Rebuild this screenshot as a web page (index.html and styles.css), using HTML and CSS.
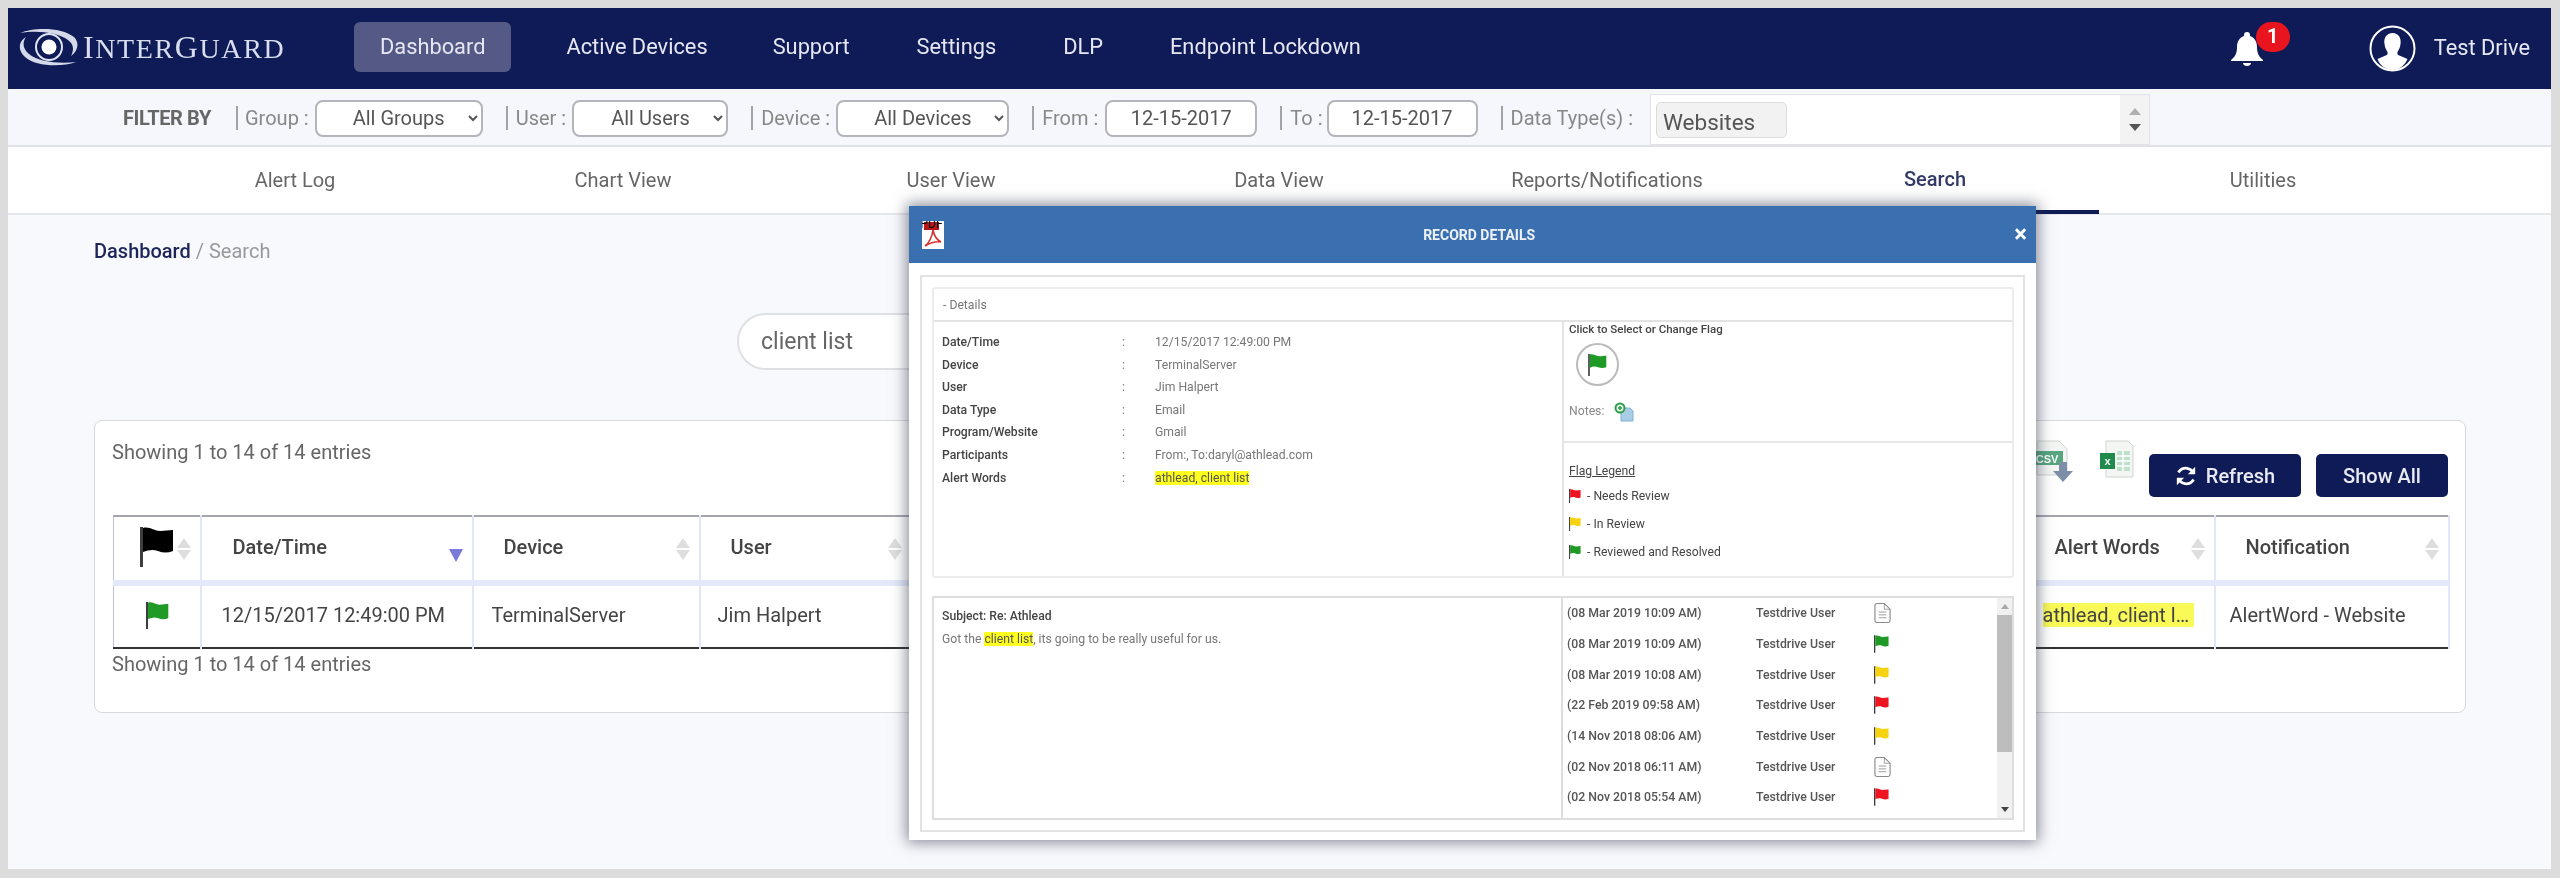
FILE: index.html
```html
<!DOCTYPE html>
<html lang="en">
<head>
<meta charset="utf-8">
<title>InterGuard - Search</title>
<link rel="stylesheet" href="styles.css">
</head>
<body>
<svg class="defs" width="0" height="0" aria-hidden="true">
  <symbol id="flag" viewBox="0 0 34 40">
    <path d="M0 0h3v40H0z" class="pole"/>
    <path d="M3 1C9-1 14 4 20 4c5 0 9-1 13-1v21c-5 2-10 2-15 0-5-2-10-1-15 1z"/>
  </symbol>
  <symbol id="doc" viewBox="0 0 18 22">
    <path d="M3 1h8l6 6v12a2 2 0 0 1-2 2H3a2 2 0 0 1-2-2V3a2 2 0 0 1 2-2z" fill="#fff" stroke="#8a8a8a" stroke-width="1.2"/>
    <path d="M11 1v6h6M5 10h8M5 13h8M5 16h8" fill="none" stroke="#9a9a9a"/>
  </symbol>
</svg>
<div class="app">
  <header class="topbar">
    <div class="logo">
      <svg class="eye" viewBox="0 0 62 38" aria-hidden="true">
        <circle cx="31" cy="19" r="7.5" fill="#fff"/>
        <circle cx="31" cy="19" r="13" fill="none" stroke="#dfe3f2" stroke-width="2"/>
        <path d="M2 5C16-1 44-1 56 9c5 5 5 13-3 19 3-6 3-12-3-16C40 4 18 2 2 5z" fill="#d5daea"/>
        <path d="M58 34C44 39 18 39 7 29-1 22 1 13 8 9 4 15 5 21 11 26c10 8 30 10 47 8z" fill="#d5daea"/>
      </svg>
      <span class="logo-text">I<span class="sc">NTER</span>G<span class="sc">UARD</span></span>
    </div>
    <nav class="mainnav">
      <a class="nav-item active">Dashboard</a>
      <a class="nav-item nav-tight">Active Devices</a>
      <a class="nav-item">Support</a>
      <a class="nav-item">Settings</a>
      <a class="nav-item">DLP</a>
      <a class="nav-item">Endpoint Lockdown</a>
    </nav>
    <div class="bell">
      <svg class="bell-icon" viewBox="0 0 34 34" aria-hidden="true">
        <path d="M17 0c2 0 3 1 3 3v1c5 2 7 6 7 11 0 6 2 10 6 13v1H1v-1c4-3 6-7 6-13 0-5 2-9 7-11V3c0-2 1-3 3-3z" fill="#fff"/>
        <path d="M13 31h8c0 2-2 3-4 3s-4-1-4-3z" fill="#fff"/>
      </svg>
      <span class="badge">1</span>
    </div>
    <svg class="avatar" viewBox="0 0 47 47" aria-hidden="true">
      <circle cx="23.5" cy="23.5" r="22" fill="none" stroke="#fff" stroke-width="2"/>
      <path d="M23.5 8c6 0 9 5 8 11-.4 4-2 6-3 8-.5 2 0 3 3 4l7 3c-3 7-9 11-15 11S11 41 8.500 34l7-3c3-1 3.500-2 3-4-1-2-2.600-4-3-8-1-6 2-11 8-11z" fill="#fff"/>
    </svg>
    <span class="username">Test Drive</span>
  </header>

  <div class="filterbar">
    <strong class="filter-title">FILTER BY</strong>
    <span class="sep"></span><label class="f-label f-first">Group :</label>
    <select class="ctl sel-group"><option>All Groups</option></select>
    <span class="sep"></span><label class="f-label">User :</label>
    <select class="ctl sel-user"><option>All Users</option></select>
    <span class="sep"></span><label class="f-label">Device :</label>
    <select class="ctl sel-device"><option>All Devices</option></select>
    <span class="sep"></span><label class="f-label">From :</label>
    <input class="ctl date date-from" value="12-15-2017">
    <span class="sep"></span><label class="f-label">To :</label>
    <input class="ctl date date-to" value="12-15-2017">
    <span class="sep"></span><label class="f-label">Data Type(s) :</label>
    <div class="listbox">
      <div class="listbox-items"><span class="listbox-option">Websites</span></div>
      <div class="listbox-scroll"><i class="arr up"></i><i class="arr down"></i></div>
    </div>
  </div>

  <nav class="tabs">
    <a class="tab">Alert Log</a>
    <a class="tab">Chart View</a>
    <a class="tab">User View</a>
    <a class="tab">Data View</a>
    <a class="tab">Reports/Notifications</a>
    <a class="tab current">Search</a>
    <a class="tab">Utilities</a>
  </nav>

  <main class="content">
    <div class="crumbs"><b>Dashboard</b> / Search</div>
    <div class="searchrow"><input class="searchbox" value="client list"></div>
    <section class="card">
      <div class="card-head">
        <span class="info">Showing 1 to 14 of 14 entries</span>
        <div class="actions">
          <svg class="csv" viewBox="0 0 48 42" aria-hidden="true">
            <path d="M8 1h22l8 8v26H8z" fill="#f4f6f4" stroke="#cfd5cf"/>
            <rect x="2" y="11" width="32" height="14" fill="#57a77f"/>
            <text x="18" y="22.500" class="csv-text" text-anchor="middle">CSV</text>
            <path d="M30 22h8v9h6L34 42 24 31h6z" fill="#7d8fa8"/>
          </svg>
          <svg class="xls" viewBox="0 0 34 38" aria-hidden="true">
            <path d="M6 1h22l5 5v31H6z" fill="#f3f6f3" stroke="#cfd5cf"/>
            <path d="M17 11h13v20H17z" fill="#bfe0cb"/>
            <path d="M17 16h13M17 21h13M17 26h13M23 11v20" stroke="#fff" stroke-width="1.500"/>
            <rect x="0" y="13" width="15" height="16" fill="#1f8a4c"/>
            <text x="7.500" y="25" class="xls-text" text-anchor="middle">x</text>
          </svg>
          <button class="btn btn-refresh">
            <svg class="sync" viewBox="0 0 24 24" aria-hidden="true">
              <path d="M20 9A9 9 0 0 0 5 6.500L3.500 8M4 15a9 9 0 0 0 15 2.500l1.500-1.500" fill="none" stroke="#fff" stroke-width="3"/>
              <path d="M22 2v8h-8zM2 22v-8h8z" fill="#fff"/>
            </svg>
            Refresh
          </button>
          <button class="btn btn-showall">Show All</button>
        </div>
      </div>
      <table class="grid">
        <colgroup>
          <col class="c-flag"><col class="c-date"><col class="c-device"><col class="c-user"><col class="c-gap"><col class="c-alert"><col class="c-notif">
        </colgroup>
        <thead>
          <tr>
            <th class="sort th-flag"><svg class="flag flag-black"><use href="#flag"/></svg></th>
            <th class="sort-desc th-date">Date/Time</th>
            <th class="sort">Device</th>
            <th class="sort">User</th>
            <th></th>
            <th class="sort th-alert">Alert Words</th>
            <th class="sort th-notif">Notification</th>
          </tr>
        </thead>
        <tbody>
          <tr>
            <td class="td-flag"><svg class="flag flag-row green"><use href="#flag"/></svg></td>
            <td class="td-date">12/15/2017 12:49:00 PM</td>
            <td>TerminalServer</td>
            <td class="td-user">Jim Halpert</td>
            <td></td>
            <td class="td-alert"><span class="hl-cell">athlead, client list</span></td>
            <td class="td-notif">AlertWord - Website</td>
          </tr>
        </tbody>
      </table>
      <div class="info info-foot">Showing 1 to 14 of 14 entries</div>
    </section>
  </main>

  <div class="modal" role="dialog">
    <div class="modal-head">
      <svg class="pdf" viewBox="0 0 22 28" aria-hidden="true">
        <path d="M0 0h22v28H0z" fill="#fff"/>
        <path d="M2 1h15v8H2z" fill="#b8141a"/>
        <text x="9.500" y="7" class="pdf-text" text-anchor="middle">PDF</text>
        <path d="M11 9c-1 7-4 13-8 16 5-3 11-5 16-4-4-2-7-7-8-12z" fill="none" stroke="#d5332f" stroke-width="1.600"/>
      </svg>
      <span class="modal-title">RECORD DETAILS</span>
      <span class="modal-close">×</span>
    </div>
    <div class="modal-body">
      <div class="frame">
        <section class="box-details">
          <div class="details-head">- Details</div>
          <div class="details-main">
            <div class="fields">
              <div class="field"><b>Date/Time</b><span class="colon">:</span><span>12/15/2017 12:49:00 PM</span></div>
              <div class="field"><b>Device</b><span class="colon">:</span><span>TerminalServer</span></div>
              <div class="field"><b>User</b><span class="colon">:</span><span>Jim Halpert</span></div>
              <div class="field"><b>Data Type</b><span class="colon">:</span><span>Email</span></div>
              <div class="field"><b>Program/Website</b><span class="colon">:</span><span>Gmail</span></div>
              <div class="field"><b>Participants</b><span class="colon">:</span><span>From:, To:daryl@athlead.com</span></div>
              <div class="field"><b>Alert Words</b><span class="colon">:</span><span><mark>athlead, client list</mark></span></div>
            </div>
            <div class="flags">
              <div class="flag-pick">
                <div class="pick-title">Click to Select or Change Flag</div>
                <div class="flag-circle"><svg class="flag flag-big green"><use href="#flag"/></svg></div>
                <div class="notes">Notes:
                  <svg class="note-icon" viewBox="0 0 20 20" aria-hidden="true">
                    <path d="M7 6h9l3 3v10H7z" fill="#a9cde6" stroke="#7fb0d3"/>
                    <circle cx="6" cy="6" r="5.500" fill="#2f9d4c"/>
                    <circle cx="6" cy="6" r="3.500" fill="#e3f4e7"/>
                    <path d="M4 6h4M6 4v4" stroke="#2f9d4c" stroke-width="1.500"/>
                  </svg>
                </div>
              </div>
              <div class="legend">
                <div class="legend-title">Flag Legend</div>
                <div class="legend-row"><svg class="flag flag-mini red"><use href="#flag"/></svg> - Needs Review</div>
                <div class="legend-row"><svg class="flag flag-mini yellow"><use href="#flag"/></svg> - In Review</div>
                <div class="legend-row"><svg class="flag flag-mini green"><use href="#flag"/></svg> - Reviewed and Resolved</div>
              </div>
            </div>
          </div>
        </section>
        <section class="box-message">
          <div class="message">
            <div class="subject">Subject: Re: Athlead</div>
            <div class="msgtext">Got the <mark>client list</mark>, its going to be really useful for us.</div>
          </div>
          <div class="history">
            <div class="history-list">
              <div class="hrow"><span>(08 Mar 2019 10:09 AM)</span><span>Testdrive User</span><svg class="doc"><use href="#doc"/></svg></div>
              <div class="hrow"><span>(08 Mar 2019 10:09 AM)</span><span>Testdrive User</span><svg class="flag flag-hist green"><use href="#flag"/></svg></div>
              <div class="hrow"><span>(08 Mar 2019 10:08 AM)</span><span>Testdrive User</span><svg class="flag flag-hist yellow"><use href="#flag"/></svg></div>
              <div class="hrow"><span>(22 Feb 2019 09:58 AM)</span><span>Testdrive User</span><svg class="flag flag-hist red"><use href="#flag"/></svg></div>
              <div class="hrow"><span>(14 Nov 2018 08:06 AM)</span><span>Testdrive User</span><svg class="flag flag-hist yellow"><use href="#flag"/></svg></div>
              <div class="hrow"><span>(02 Nov 2018 06:11 AM)</span><span>Testdrive User</span><svg class="doc"><use href="#doc"/></svg></div>
              <div class="hrow"><span>(02 Nov 2018 05:54 AM)</span><span>Testdrive User</span><svg class="flag flag-hist red"><use href="#flag"/></svg></div>
            </div>
            <div class="vscroll"><i class="arr up small"></i><div class="thumb"></div><i class="arr down small"></i></div>
          </div>
        </section>
      </div>
    </div>
  </div>
</div>
</body>
</html>
```
FILE: styles.css
```css
* { box-sizing: border-box; }
html, body { margin: 0; height: 100%; }
body { background: #dcdcdc; font-family: Roboto, "Liberation Sans", sans-serif; overflow: hidden; }
.defs { position: absolute; }
.app { position: relative; margin: 8px 9px 0 8px; height: 861px; background: #f8f9fd; filter: blur(.5px); overflow: hidden; }

/* top bar */
.topbar { display: flex; align-items: center; height: 81px; background: #0e1b57; color: #e6e7f2; }
.logo { display: flex; align-items: center; width: 346px; padding: 0 0 3px 10px; flex: none; }
.eye { width: 62px; height: 38px; flex: none; }
.logo-text { font-family: "Liberation Serif", serif; font-size: 32px; color: #d9deee; margin-left: 3px; letter-spacing: 1.600px; white-space: nowrap; }
.sc { font-size: 28px; }
.mainnav { display: flex; align-items: center; flex: 1; margin-top: -3px; }
.nav-item { font-size: 21.800px; padding: 0 25px; line-height: 50px; margin-right: 17px; border-radius: 6px; white-space: nowrap; }
.nav-item.active { background: #545985; margin-right: 30px; padding: 0 26px; }
.nav-item.nav-tight { margin-right: 15px; }
.bell { position: relative; width: 60px; height: 50px; flex: none; margin: -3px 79px 0 0; }
.bell-icon { position: absolute; left: 0; top: 10px; width: 34px; height: 34px; }
.badge { position: absolute; left: 26px; top: 0; width: 34px; height: 30px; border-radius: 15px; background: #e8151f; color: #fff; font-size: 20px; font-weight: 700; text-align: center; line-height: 28px; }
.avatar { width: 47px; height: 47px; flex: none; }
.username { font-size: 21.800px; margin: -3px 21px 0 18px; white-space: nowrap; }

/* filter bar */
.filterbar { display: flex; align-items: center; height: 58px; padding: 2px 0 0 115px; background: #f6f7fc; border-bottom: 2px solid #e1e2e6; color: #888; font-size: 20px; }
.filter-title { font-weight: 700; color: #666; font-size: 20px; width: 90px; letter-spacing: -.4px; flex: none; white-space: nowrap; }
.sep { width: 2px; height: 24px; background: #a2a2a8; margin-left: 23px; flex: none; }
.f-label { margin-left: 8px; margin-right: 6px; flex: none; white-space: nowrap; }
.f-first { margin-left: 7px; }
.ctl { height: 37px; border: 2px solid #b4b5bb; border-radius: 8px; background: #fff; color: #555; font: 400 20px Roboto, sans-serif; flex: none; }
.sel-group { width: 168px; padding-left: 32px; }
.sel-user { width: 156px; padding-left: 33px; }
.sel-device { width: 173px; padding-left: 32px; }
.date { text-align: center; padding: 0; }
.date-from { width: 152px; margin-left: 1px; }
.date-to { width: 151px; margin-left: -2px; }
.listbox { display: flex; width: 500px; height: 51px; margin-left: 11px; align-self: flex-end; background: #fff; border: 1px solid #e3e3e6; flex: none; }
.listbox-items { flex: 1; padding: 7px 5px; }
.listbox-option { display: block; width: 131px; height: 36px; line-height: 38px; padding-left: 6px; background: #f2f2f2; border: 1px solid #dcdcdc; border-radius: 5px; font-size: 22.500px; color: #555; }
.listbox-scroll { width: 29px; background: #f3f3f3; display: flex; flex-direction: column; align-items: center; justify-content: space-around; padding: 8px 0; }
.arr { display: block; width: 0; height: 0; border-left: 6px solid transparent; border-right: 6px solid transparent; }
.arr.up { border-bottom: 7px solid #b0b0b0; }
.arr.down { border-top: 7px solid #555; }
.arr.small { border-left-width: 4px; border-right-width: 4px; }
.arr.small.up { border-bottom-width: 5px; border-bottom-color: #a8a8a8; }
.arr.small.down { border-top-width: 5px; border-top-color: #444; }

/* tabs */
.tabs { display: grid; grid-template-columns: repeat(7, 328px); height: 68px; padding-left: 123px; background: #fff; border-bottom: 2px solid #e6e7ea; }
.tab { display: flex; align-items: center; justify-content: center; font-size: 20px; color: #666; }
.tab.current { color: #333a66; font-weight: 500; border-bottom: 4px solid #0e1b57; margin-bottom: -1px; }

/* content */
.content { padding: 24px 85px 0 86px; }
.crumbs { font-size: 20px; line-height: 24px; color: #999; }
.crumbs b { font-weight: 500; color: #1d2559; }
.searchrow { margin-top: 50px; display: flex; justify-content: center; }
.searchbox { width: 1086px; height: 57px; padding: 0 22px; border: 2px solid #dfe0e4; border-radius: 29px; background: #fff; font: 400 23px Roboto, sans-serif; color: #666; }
.card { margin-top: 50px; height: 293px; padding: 0 17px 0 18px; background: #fff; border: 1px solid #d8d9de; border-radius: 8px; }
.card-head { display: flex; justify-content: space-between; height: 94px; }
.info { font-size: 20px; color: #666; line-height: 24px; margin-left: -1px; }
.card-head .info { margin-top: 19px; }
.actions { display: flex; align-items: flex-start; }
.csv { width: 48px; height: 42px; margin-top: 19px; }
.csv-text { font: 700 11px "Liberation Sans", sans-serif; fill: #fff; }
.xls { width: 34px; height: 38px; margin: 19px 15px 0 23px; }
.xls-text { font: 700 11px "Liberation Sans", sans-serif; fill: #fff; }
.btn { display: flex; align-items: center; justify-content: center; height: 43px; margin-top: 33px; border: 0; border-radius: 5px; background: #0e1b57; color: #e9eaf2; font: 500 20px Roboto, sans-serif; }
.btn-refresh { width: 152px; gap: 9px; }
.btn-showall { width: 132px; margin-left: 15px; }
.sync { width: 22px; height: 22px; }

/* table */
.grid { width: 2335px; table-layout: fixed; border-collapse: collapse; border-top: 2px solid #a5a6ac; border-left: 1px solid #bfc3de; border-right: 2px solid #c4c8e4; border-bottom: 2px solid #333; font-size: 20px; color: #444; }
.c-flag { width: 87px; } .c-date { width: 272px; } .c-device { width: 227px; } .c-user { width: 212px; }
.c-gap { width: 1119px; } .c-alert { width: 184px; } .c-notif { width: 234px; }
.grid th { position: relative; height: 67px; padding: 0 0 3px 30px; border-right: 2px solid #e3e6f8; border-bottom: 6px solid #e4e8fb; text-align: left; font-weight: 500; font-size: 20px; color: #444; }
.grid td { height: 65px; padding: 0 0 3px 18px; border-right: 2px solid #e3e6f8; white-space: nowrap; overflow: hidden; }
.sort::before, .sort::after { content: ""; position: absolute; right: 9px; width: 0; height: 0; border-left: 7px solid transparent; border-right: 7px solid transparent; }
.sort::before { top: 21px; border-bottom: 10px solid #dedede; }
.sort::after { top: 33px; border-top: 10px solid #dedede; }
.sort-desc::after { content: ""; position: absolute; right: 9px; top: 32px; width: 0; height: 0; border-left: 7px solid transparent; border-right: 7px solid transparent; border-top: 13px solid #7a78d8; }
.grid .th-flag { padding-left: 26px; }
.grid .th-date { padding-left: 31px; }
.grid .th-alert { padding-left: 23px; }
.grid .td-flag { padding-left: 32px; }
.grid .td-date { padding-left: 20px; }
.grid .td-user { padding-left: 17px; }
.grid .td-alert { padding-left: 11px; }
.grid .td-notif { padding-left: 14px; }
.hl-cell { display: block; width: 151px; overflow: hidden; text-overflow: ellipsis; background: #f9f958; line-height: 24px; }
.flag { display: block; fill: currentColor; }
.pole { fill: #3d3d3d; }
.flag-black { width: 34px; height: 40px; color: #000; }
.flag-black .pole { fill: #000; }
.flag-row { width: 23px; height: 27px; }
.flag-big { width: 19px; height: 22px; }
.flag-mini { width: 12px; height: 14px; }
.flag-hist { width: 15px; height: 18px; }
.green { color: #1f9a26; }
.red { color: #ef1520; }
.yellow { color: #f6d310; }
.info-foot { margin-top: 3px; }

/* modal */
.modal { position: absolute; left: 901px; top: 198px; width: 1127px; height: 634px; background: #fff; box-shadow: 0 0 14px 2px rgba(50,55,75,.6); display: flex; flex-direction: column; font-size: 12.200px; color: #777; }
.modal-head { display: flex; align-items: center; height: 57px; padding: 0 9px 0 13px; background: #3a70b0; color: #fff; flex: none; }
.pdf { width: 22px; height: 28px; flex: none; }
.modal-title { flex: 1; text-align: center; font-weight: 700; font-size: 14px; color: #eef2f8; }
.modal-close { font-size: 24px; font-weight: 700; line-height: 24px; margin-top: -2px; }
.modal-body { flex: 1; padding: 12px 11px 8px; min-height: 0; }
.frame { height: 100%; padding: 10px 9px 10px 10px; border: 2px solid #e2e2e2; display: flex; flex-direction: column; gap: 18px; }
.box-details { height: 291px; border: 2px solid #ececec; border-radius: 3px; flex: none; display: flex; flex-direction: column; }
.details-head { height: 33px; line-height: 33px; padding-left: 9px; border-bottom: 2px solid #e2e2e2; flex: none; }
.details-main { flex: 1; display: flex; }
.fields { width: 630px; padding: 9px 0 0 8px; border-right: 2px solid #e4e4e4; flex: none; }
.field { display: grid; grid-template-columns: 180px 33px 1fr; height: 22.600px; line-height: 22.600px; }
.field b { font-weight: 500; color: #444; }
mark { background: #ffff1f; color: #555; }
.flags { flex: 1; display: flex; flex-direction: column; }
.flag-pick { height: 121px; padding-left: 5px; border-bottom: 2px solid #e6e6e6; }
.pick-title { font-size: 11.500px; font-weight: 500; color: #444; line-height: 14px; }
.flag-circle { display: flex; align-items: center; justify-content: center; width: 43px; height: 43px; margin: 7px 0 0 7px; border: 2px solid #bbb; border-radius: 50%; }
.notes { display: flex; align-items: center; gap: 10px; margin-top: 14px; color: #888; }
.note-icon { width: 20px; height: 20px; margin-top: 2px; }
.legend { padding: 20px 0 0 5px; color: #444; }
.legend-title { text-decoration: underline; line-height: 16px; margin-bottom: 3px; }
.legend-row { display: flex; align-items: center; gap: 3px; height: 28px; white-space: pre; }
.box-message { flex: 1; display: flex; min-height: 0; border: 2px solid #dedede; }
.message { width: 629px; padding: 9px 8px; border-right: 2px solid #ddd; flex: none; }
.subject { font-weight: 500; color: #444; line-height: 18px; }
.msgtext { line-height: 18px; margin-top: 5px; color: #777; }
.history { flex: 1; display: flex; min-width: 0; }
.history-list { flex: 1; padding: 0 0 0 4px; color: #555; }
.hrow { display: grid; grid-template-columns: 189px 118px 20px; align-items: center; height: 30.700px; font-weight: 500; font-size: 12.300px; }
.doc { width: 17px; height: 22px; display: block; }
.vscroll { width: 15px; background: #f1f1f1; display: flex; flex-direction: column; align-items: center; justify-content: space-between; padding: 6px 0; }
.thumb { width: 15px; height: 137px; background: #bdbdbd; margin-bottom: 50px; }
```
